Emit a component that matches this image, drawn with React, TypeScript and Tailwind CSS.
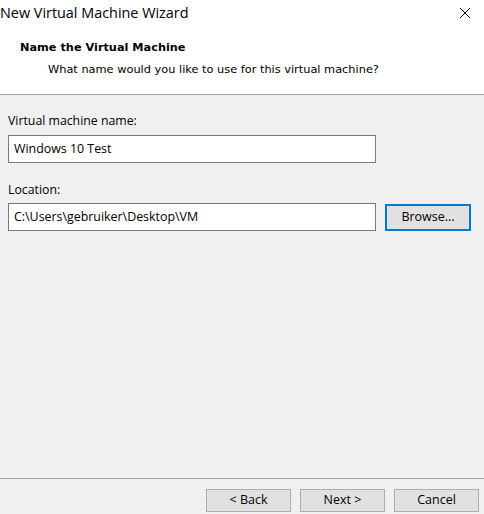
import React from 'react'

const ui = { fontFamily: '"Segoe UI", "Open Sans", "Noto Sans", sans-serif' }
const tahoma = { fontFamily: 'Tahoma, "DejaVu Sans", Verdana, sans-serif' }

// Plain Win10-style push button
const Button = ({ label, focused = false }: { label: string; focused?: boolean }) => (
  <button
    className={
      focused
        ? 'h-[27px] w-[86px] bg-[#e1e1e1] border-2 border-[#0078d7] text-[12.5px] text-black'
        : 'h-[23px] w-[85px] bg-[#e1e1e1] border border-[#adadad] text-[12.5px] text-black'
    }
    style={ui}
  >
    {label}
  </button>
)

const Field = ({ value }: { value: string }) => (
  <div className="h-[28px] w-[368px] bg-white border border-[#7a7a7a] flex items-center px-[5px] text-[12.4px] text-black" style={ui}>
    {value}
  </div>
)

export default function App() {
  return (
    <div className="w-[484px] h-[514px] bg-[#f0f0f0] flex flex-col overflow-hidden">
      {/* title bar + wizard header */}
      <div className="h-[95px] bg-white border-b border-[#a0a0a0] flex flex-col">
        <div className="h-[28px] flex items-start justify-between">
          <span className="text-[14.4px] text-black leading-[26px]" style={ui}>
            New Virtual Machine Wizard
          </span>
          <svg width="12" height="12" viewBox="0 0 12 12" className="mt-[7px] mr-[13px]">
            <path d="M1 1 L11 11 M11 1 L1 11" stroke="#000" strokeWidth="1" />
          </svg>
        </div>
        <div className="pl-[20px] pt-[13px] text-[11.3px] font-bold text-black leading-[14px]" style={tahoma}>
          Name the Virtual Machine
        </div>
        <div className="pl-[48px] pt-[7px] text-[11.35px] text-black leading-[14px]" style={tahoma}>
          What name would you like to use for this virtual machine?
        </div>
      </div>

      {/* form */}
      <div className="flex-1 px-[8px] pt-[18px] flex flex-col">
        <label className="text-[12.3px] text-black leading-[16px]" style={ui}>
          Virtual machine name:
        </label>
        <div className="mt-[6px]">
          <Field value="Windows 10 Test" />
        </div>
        <label className="mt-[19px] text-[12.3px] text-black leading-[16px]" style={ui}>
          Location:
        </label>
        <div className="mt-[5px] flex items-center gap-[9px]">
          <Field value={'C:\\Users\\gebruiker\\Desktop\\VM'} />
          <Button label="Browse..." focused />
        </div>
      </div>

      {/* footer */}
      <div className="h-[36px] border-t border-[#a0a0a0] flex items-start justify-end gap-[9px] pr-[5px] pt-[10px]">
        <Button label="< Back" />
        <Button label="Next >" />
        <Button label="Cancel" />
      </div>
    </div>
  )
}
